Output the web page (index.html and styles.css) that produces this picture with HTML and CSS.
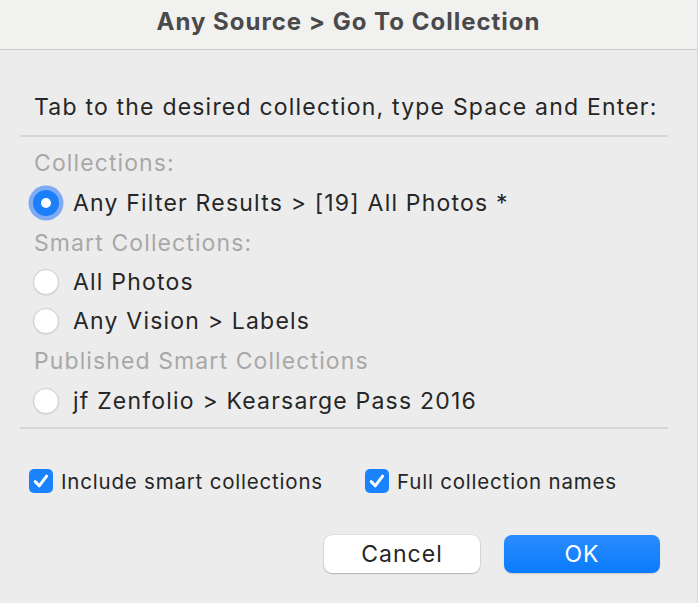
FILE: index.html
```html
<!DOCTYPE html>
<html>
<head>
<meta charset="utf-8">
<link rel="stylesheet" href="styles.css">
</head>
<body>
<div class="dialog">
  <div class="titlebar">Any Source &gt; Go To Collection</div>
  <div class="content">
    <div class="prompt">Tab to the desired collection, type Space and Enter:</div>
    <div class="sep"></div>
    <div class="list">
      <div class="group">Collections:</div>
      <div class="row"><span class="radio selected"></span><span class="label">Any Filter Results &gt; [19] All Photos *</span></div>
      <div class="group">Smart Collections:</div>
      <div class="row short"><span class="radio"></span><span class="label">All Photos</span></div>
      <div class="row"><span class="radio"></span><span class="label">Any Vision &gt; Labels</span></div>
      <div class="group">Published Smart Collections</div>
      <div class="row"><span class="radio"></span><span class="label">jf Zenfolio &gt; Kearsarge Pass 2016</span></div>
    </div>
    <div class="sep sep2"></div>
    <div class="options">
      <label class="check"><span class="box"><svg viewBox="0 0 24 24" width="24" height="24"><path d="M6.2 12.6 L10.2 16.8 L17.6 7.2" fill="none" stroke="#fff" stroke-width="3" stroke-linecap="round" stroke-linejoin="round"/></svg></span><span>Include smart collections</span></label>
      <label class="check"><span class="box"><svg viewBox="0 0 24 24" width="24" height="24"><path d="M6.2 12.6 L10.2 16.8 L17.6 7.2" fill="none" stroke="#fff" stroke-width="3" stroke-linecap="round" stroke-linejoin="round"/></svg></span><span>Full collection names</span></label>
    </div>
    <div class="buttons">
      <button class="btn cancel">Cancel</button>
      <button class="btn ok">OK</button>
    </div>
  </div>
</div>
</body>
</html>
```

FILE: styles.css
```css
html, body {
  margin: 0;
  padding: 0;
  background: #ececec;
}
body {
  font-family: Inter, "Liberation Sans", sans-serif;
  color: #262626;
  width: 698px;
  height: 603px;
  overflow: hidden;
}
.dialog {
  display: flex;
  flex-direction: column;
  height: 603px;
  border-right: 1px solid #d8d8d8;
  box-sizing: border-box;
}
.titlebar {
  height: 50px;
  padding-bottom: 6px;
  box-sizing: border-box;
  background: #f1f1f0;
  border-bottom: 1px solid #cbcbcb;
  display: flex;
  align-items: center;
  justify-content: center;
  font-size: 24px;
  font-weight: 700;
  color: #4a4a4a;
  letter-spacing: 1px;
}
.content {
  padding: 0 29px 0 20px;
  display: flex;
  flex-direction: column;
}
.prompt {
  margin-top: 37px;
  padding-left: 14px;
  line-height: 40px;
  font-size: 23px;
  letter-spacing: 1.2px;
}
.sep {
  height: 2px;
  background: #d6d6d6;
  margin-top: 8px;
}
.list {
  display: flex;
  flex-direction: column;
  padding-top: 6px;
}
.group {
  height: 40px;
  line-height: 40px;
  padding-left: 14px;
  font-size: 23px;
  letter-spacing: 1.1px;
  color: #a8a8a8;
}
.row {
  height: 40px;
  display: flex;
  align-items: center;
  font-size: 23px;
  letter-spacing: 1.2px;
}
.row.short {
  height: 38px;
}
.radio {
  width: 26px;
  height: 26px;
  border-radius: 50%;
  background: #fff;
  border: 1px solid #cfcfcf;
  box-shadow: 0 0.5px 1px rgba(0,0,0,0.12);
  margin-left: 13px;
  margin-right: 14px;
  box-sizing: border-box;
  position: relative;
  flex: none;
}
.radio.selected {
  background: #1a7ff9;
  border: none;
  box-shadow: 0 0 0 4.5px #7fabf5;
}
.radio.selected::after {
  content: "";
  position: absolute;
  left: 8px;
  top: 8px;
  width: 10px;
  height: 10px;
  border-radius: 50%;
  background: #fff;
}
.sep2 {
  margin-top: 6px;
}
.options {
  display: flex;
  margin-top: 37px;
  height: 30px;
  align-items: center;
  font-size: 20.5px;
  letter-spacing: 0.8px;
}
.check {
  display: flex;
  align-items: center;
}
.check:first-child {
  margin-left: 9px;
  width: 336px;
}
.box {
  width: 24px;
  height: 24px;
  border-radius: 5px;
  background: #1a82fb;
  margin-right: 8px;
  display: flex;
}
.buttons {
  display: flex;
  justify-content: flex-end;
  gap: 24px;
  margin-top: 39px;
  padding-right: 8px;
}
.btn {
  width: 156px;
  height: 38px;
  border-radius: 8px;
  border: none;
  font-family: inherit;
  font-size: 23px;
  letter-spacing: 1px;
  padding: 0;
}
.cancel {
  background: #fff;
  color: #262626;
  box-shadow: 0 0 0 0.5px rgba(0,0,0,0.12), 0 1px 1.5px rgba(0,0,0,0.2);
}
.ok {
  background: linear-gradient(#2a8cfd, #0a7bfb);
  color: #fff;
  box-shadow: 0 1px 1.5px rgba(0,0,0,0.15);
}
```
